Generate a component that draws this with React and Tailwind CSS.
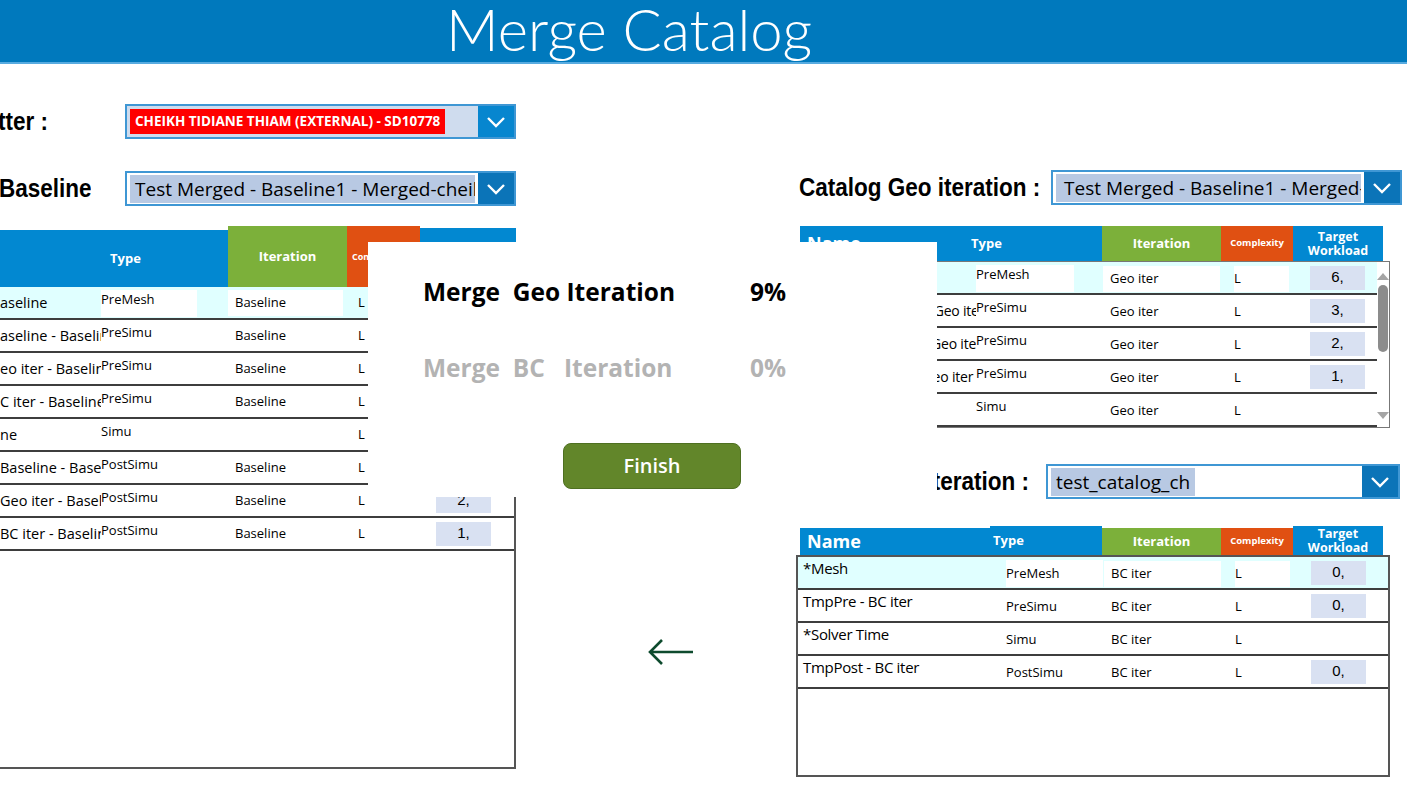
import React from "react";

const leftRows = [
  { name: "aseline", type: "PreMesh", it: "Baseline", tw: "6," },
  { name: "aseline - Baseline", type: "PreSimu", it: "Baseline", tw: "3," },
  { name: "eo iter - Baseline", type: "PreSimu", it: "Baseline", tw: "2," },
  { name: "C iter - Baseline", type: "PreSimu", it: "Baseline", tw: "1," },
  { name: "ne", type: "Simu", it: "", tw: "" },
  { name: " Baseline - Baseline", type: "PostSimu", it: "Baseline", tw: "3," },
  { name: " Geo iter - Baseline", type: "PostSimu", it: "Baseline", tw: "2," },
  { name: " BC iter - Baseline", type: "PostSimu", it: "Baseline", tw: "1," },
];

const geoRows = [
  { name: "*Mesh", type: "PreMesh", tw: "6," },
  { name: "TmpPre - Baseline - Geo iter", type: "PreSimu", tw: "3," },
  { name: "TmpPre - Geo iter - Geo iter", type: "PreSimu", tw: "2," },
  { name: "TmpPre - BC iter - Geo iter", type: "PreSimu", tw: "1," },
  { name: "*Solver Time", type: "Simu", tw: "" },
];

const bcRows = [
  { name: "*Mesh", type: "PreMesh", tw: "0," },
  { name: "TmpPre - BC iter", type: "PreSimu", tw: "0," },
  { name: "*Solver Time", type: "Simu", tw: "" },
  { name: "TmpPost - BC iter", type: "PostSimu", tw: "0," },
];

const Chevron = () => (
  <svg width="20" height="12" viewBox="0 0 20 12" fill="none">
    <path d="M2 2 L10 10 L18 2" stroke="white" strokeWidth="2.4" />
  </svg>
);

const Dropdown = ({ width, btn, children, inner = "bg-white" }) => (
  <div className={`flex h-[35px] border-2 border-[#3f97d4] ${width}`}>
    <div className={`flex-1 flex items-center px-[3px] overflow-hidden ${inner}`}>
      {children}
    </div>
    <div className={`w-[36px] flex items-center justify-center ${btn}`}>
      <Chevron />
    </div>
  </div>
);

const FormLabel = ({ children, className = "" }) => (
  <div
    className={`font-['Liberation_Sans',sans-serif] font-bold text-[25px] text-black whitespace-nowrap scale-x-[0.9] ${className}`}
  >
    {children}
  </div>
);

const Target = ({ v }) =>
  v ? (
    <div className="w-[55px] h-[24px] bg-[#d9e1f2] flex items-center justify-center text-[15px] font-['Liberation_Sans',sans-serif]">
      {v}
    </div>
  ) : null;

export default function App() {
  return (
    <div className="relative w-[1407px] h-[797px] overflow-hidden bg-white font-['Open_Sans',sans-serif] text-black">
      {/* title bar */}
      <div className="h-[64px] bg-[#0079bd] border-b-2 border-[#58abe0] pl-[446px]">
        <h1 className="font-['Lato',sans-serif] font-light text-[58px] leading-[58px] text-white">
          Merge Catalog
        </h1>
      </div>

      <div className="flex">
        {/* Left side */}
        <div className="w-[516px] shrink-0">
          <div className="flex items-center mt-[40px]">
            <div className="w-[125px] h-[35px] flex items-center">
              <div className="w-[48px] overflow-hidden flex justify-end">
                <FormLabel className="origin-right">Submitter :</FormLabel>
              </div>
            </div>
            <Dropdown width="w-[391px]" btn="bg-[#0786cf]" inner="bg-[#cfdcee]">
              <span className="bg-[#ff0000] text-white font-bold text-[13.5px] h-[25px] flex items-center px-[5px] whitespace-nowrap">
                CHEIKH TIDIANE THIAM (EXTERNAL) - SD10778
              </span>
            </Dropdown>
          </div>

          <div className="flex items-center mt-[32px]">
            <div className="w-[125px] h-[35px] flex items-center">
              <div className="w-[91px] overflow-hidden flex justify-end">
                <FormLabel className="origin-right">Catalog Baseline</FormLabel>
              </div>
            </div>
            <Dropdown width="w-[391px]" btn="bg-[#0b74b8]">
              <span className="bg-[#b8c9e3] text-[19px] whitespace-nowrap h-[28px] leading-[28px] pl-[5px] w-full overflow-hidden">
                Test Merged - Baseline1 - Merged-cheikh
              </span>
            </Dropdown>
          </div>

          {/* left table */}
          <div className="mt-[20px] grid grid-cols-[228px_119px_73px_96px] h-[61px] text-white font-bold">
            <div className="mt-[4px] bg-[#0288d1] flex items-center pl-[110px] text-[13px]">Type</div>
            <div className="bg-[#7cb03a] flex items-center justify-center text-[13px]">Iteration</div>
            <div className="bg-[#e05012] flex items-center pl-[5px] text-[9px]">Complexity</div>
            <div className="mt-[2px] bg-[#0288d1] flex flex-col items-center justify-center text-[12px] leading-[14px]">
              <span>Target</span>
              <span>Workload</span>
            </div>
          </div>
          <div className="h-[482px] border-r-2 border-b-2 border-[#555]">
            {leftRows.map((r, i) => (
              <div
                key={i}
                className={`grid grid-cols-[101px_127px_119px_73px_96px] h-[33px] border-b-2 border-[#3d3d3d] ${
                  i === 0 ? "bg-[#e0ffff]" : ""
                }`}
              >
                <div className="overflow-hidden whitespace-nowrap text-[14.5px] flex items-center">
                  {r.name}
                </div>
                <div className="flex items-start pt-[3px]">
                  <span className={`text-[13px] w-[96px] h-[27px] ${i === 0 ? "bg-white" : ""}`}>
                    {r.type}
                  </span>
                </div>
                <div className="flex items-center">
                  <span className={`text-[13px] w-[115px] h-[26px] flex items-center pl-[7px] ${i === 0 ? "bg-white" : ""}`}>
                    {r.it}
                  </span>
                </div>
                <div className="flex items-center pl-[11px] text-[13px]">L</div>
                <div className="flex items-center pl-[16px]">
                  <Target v={r.tw} />
                </div>
              </div>
            ))}
          </div>
        </div>

        {/* middle */}
        <div className="w-[280px] shrink-0 pt-[574px] pl-[132px]">
          <svg width="46" height="28" viewBox="0 0 46 28" fill="none">
            <path d="M2 14 H45 M14 2 L2 14 L14 26" stroke="#0e4b2e" strokeWidth="2.6" />
          </svg>
        </div>

        {/* Right side */}
        <div className="w-[606px] shrink-0">
          <div className="flex items-center mt-[106px]">
            <div className="w-[255px] pl-[3px] h-[35px] flex items-center">
              <FormLabel className="origin-left">Catalog Geo iteration :</FormLabel>
            </div>
            <Dropdown width="w-[351px]" btn="bg-[#0b74b8]">
              <span className="bg-[#b8c9e3] text-[19px] whitespace-nowrap h-[28px] leading-[28px] pl-[8px] w-full overflow-hidden">
                Test Merged - Baseline1 - Merged-cheikh
              </span>
            </Dropdown>
          </div>

          {/* geo table */}
          <div className="ml-[4px] mt-[21px] w-[583px] grid grid-cols-[165px_137px_119px_72px_90px] h-[35px] text-white font-bold">
            <div className="bg-[#0288d1] flex items-center pl-[7px] text-[18px]">Name</div>
            <div className="bg-[#0288d1] flex items-center pl-[6px] text-[13px]">Type</div>
            <div className="bg-[#7cb03a] flex items-center justify-center text-[13px]">Iteration</div>
            <div className="bg-[#e05012] flex items-center justify-center text-[9.5px]">Complexity</div>
            <div className="bg-[#0288d1] flex flex-col items-center justify-center text-[12.5px] leading-[14px]">
              <span>Target</span>
              <span>Workload</span>
            </div>
          </div>
          <div className="ml-[4px] w-[590px] h-[167px] border border-[#777] flex">
            <div className="w-[576px]">
              {geoRows.map((r, i) => (
                <div
                  key={i}
                  className={`grid grid-cols-[175px_127px_119px_72px_83px] h-[33px] border-b-2 border-[#3d3d3d] ${
                    i === 0 ? "bg-[#e0ffff]" : ""
                  } ${i === 4 ? "border-b-0" : ""}`}
                >
                  <div className="overflow-hidden whitespace-nowrap text-[14px] flex items-center pl-[7px] tracking-[-0.2px]">
                    {r.name}
                  </div>
                  <div className="flex items-start pt-[3px]">
                    <span className={`text-[13px] w-[98px] h-[27px] ${i === 0 ? "bg-white" : ""}`}>
                      {r.type}
                    </span>
                  </div>
                  <div className="flex items-center pt-[2px]">
                    <span className={`text-[13px] w-[117px] h-[26px] flex items-center pl-[7px] ${i === 0 ? "bg-white" : ""}`}>
                      Geo iter
                    </span>
                  </div>
                  <div className="flex items-center pl-[12px] pt-[2px]">
                    <span className={`text-[13px] w-[55px] h-[26px] flex items-center ${i === 0 ? "bg-white" : ""}`}>
                      L
                    </span>
                  </div>
                  <div className="flex items-center pl-[16px]">
                    <Target v={r.tw} />
                  </div>
                </div>
              ))}
            </div>
            <div className="w-[12px] flex flex-col items-center">
              <div className="mt-[11px] w-0 h-0 border-l-[6px] border-r-[6px] border-b-[7px] border-l-transparent border-r-transparent border-b-[#a5a5a5]" />
              <div className="mt-[5px] w-[10px] h-[67px] rounded-full bg-[#8c8c8c]" />
              <div className="mt-auto mb-[8px] w-0 h-0 border-l-[6px] border-r-[6px] border-t-[7px] border-l-transparent border-r-transparent border-t-[#a5a5a5]" />
            </div>
          </div>

          <div className="flex items-center mt-[36px]">
            <div className="w-[250px] pl-[3px] h-[35px] flex items-center">
              <FormLabel className="origin-left">Catalog BC iteration :</FormLabel>
            </div>
            <Dropdown width="w-[354px]" btn="bg-[#0b74b8]">
              <span className="bg-[#b8c9e3] text-[19px] whitespace-nowrap h-[28px] leading-[28px] px-[5px]">
                test_catalog_ch
              </span>
            </Dropdown>
          </div>

          {/* bc table */}
          <div className="ml-[4px] mt-[27px] w-[583px] grid grid-cols-[190px_112px_119px_72px_90px] h-[29px] text-white font-bold">
            <div className="mt-[2px] bg-[#0288d1] flex items-center pl-[7px] text-[18px]">Name</div>
            <div className="bg-[#0288d1] flex items-center pl-[3px] text-[13px]">Type</div>
            <div className="mt-[2px] bg-[#7cb03a] flex items-center justify-center text-[13px]">Iteration</div>
            <div className="mt-[2px] bg-[#e05012] flex items-center justify-center text-[9.5px]">Complexity</div>
            <div className="bg-[#0288d1] flex flex-col items-center justify-center text-[12.5px] leading-[14px]">
              <span>Target</span>
              <span>Workload</span>
            </div>
          </div>
          <div className="w-[594px] h-[222px] border-2 border-[#555]">
            {bcRows.map((r, i) => (
              <div
                key={i}
                className={`grid grid-cols-[208px_98px_119px_72px_93px] h-[33px] border-b-2 border-[#3d3d3d] ${
                  i === 0 ? "bg-[#e0ffff]" : ""
                }`}
              >
                <div className="overflow-hidden whitespace-nowrap text-[15px] pl-[5px] tracking-[-0.3px]">
                  {r.name}
                </div>
                <div className="flex items-start pt-[3px]">
                  <span className={`text-[13px] w-[97px] h-[27px] flex items-center ${i === 0 ? "bg-white" : ""}`}>
                    {r.type}
                  </span>
                </div>
                <div className="flex items-center pt-[3px]">
                  <span className={`text-[13px] w-[117px] h-[26px] flex items-center pl-[7px] ${i === 0 ? "bg-white" : ""}`}>
                    BC iter
                  </span>
                </div>
                <div className="flex items-center pl-[12px] pt-[3px]">
                  <span className={`text-[13px] w-[55px] h-[26px] flex items-center ${i === 0 ? "bg-white" : ""}`}>
                    L
                  </span>
                </div>
                <div className="flex items-center pl-[16px]">
                  <Target v={r.tw} />
                </div>
              </div>
            ))}
          </div>
        </div>
      </div>

      {/* merge progress overlay */}
      <div className="absolute left-[368px] top-[242px] w-[569px] h-[255px] bg-white">
        <div className="flex items-center mt-[32px] pl-[55px] font-bold text-[24.5px]">
          <span className="w-[327px] whitespace-pre">Merge  Geo Iteration</span>
          <span>9%</span>
        </div>
        <div className="flex items-center mt-[39px] pl-[55px] font-bold text-[24.5px] text-[#b3b3b3]">
          <span className="w-[327px] whitespace-pre">Merge  BC   Iteration</span>
          <span>0%</span>
        </div>
        <div className="mt-[56px] ml-[195px] w-[178px] h-[46px] rounded-[8px] bg-[#62862a] border border-[#4e7021] flex items-center justify-center text-white text-[20px] font-semibold">
          Finish
        </div>
      </div>
    </div>
  );
}
